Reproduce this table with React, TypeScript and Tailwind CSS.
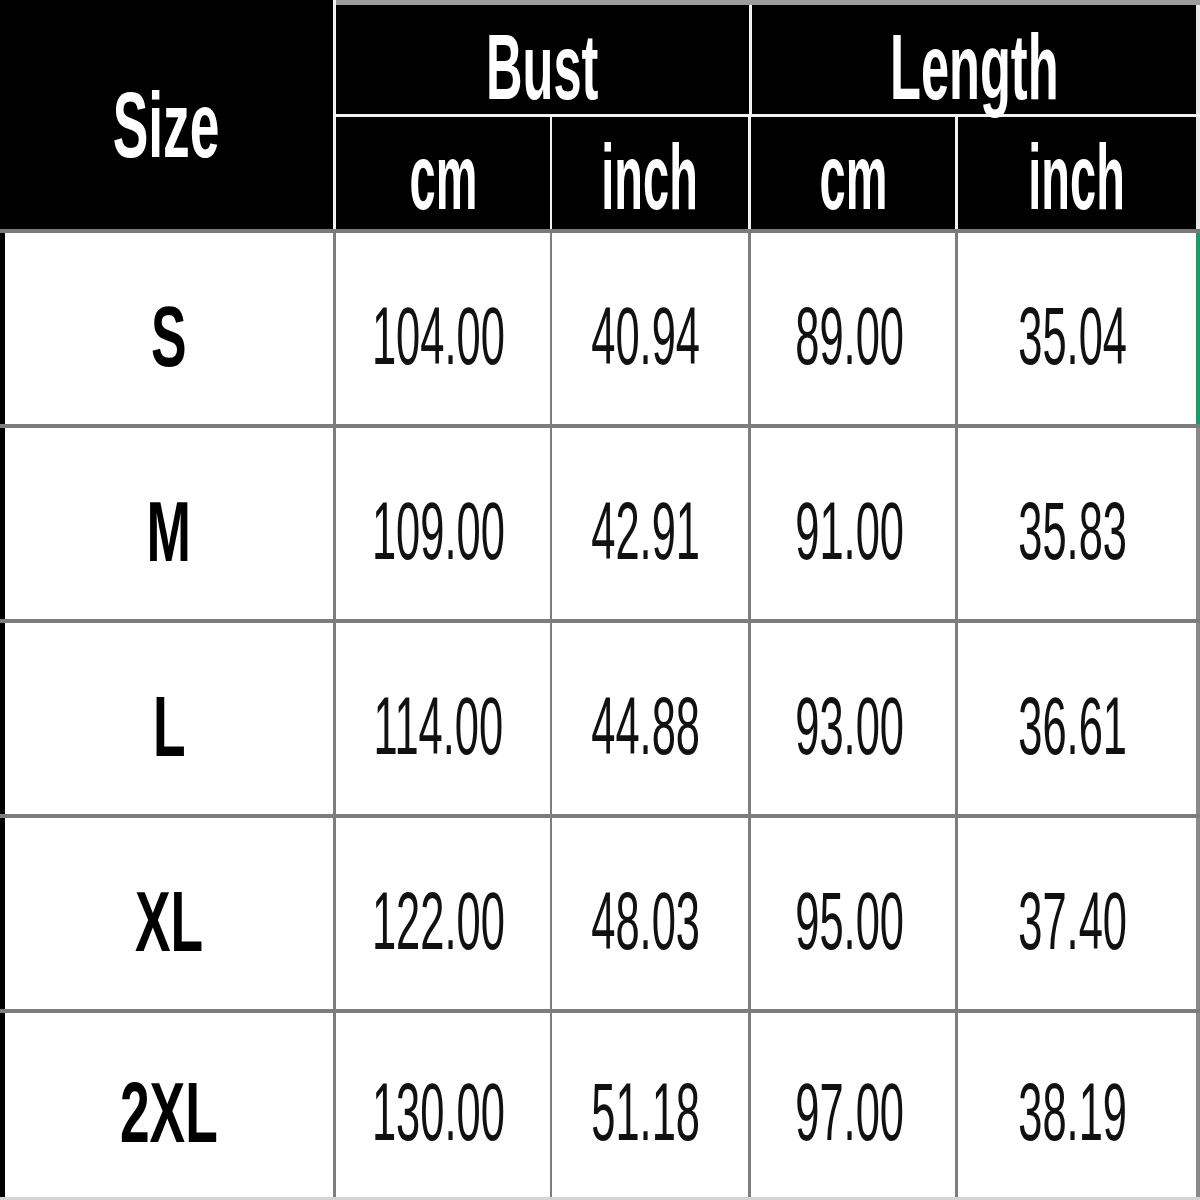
import React from 'react';

type Row = { size: string; bustCm: string; bustIn: string; lenCm: string; lenIn: string };

const rows: Row[] = [
  { size: 'S', bustCm: '104.00', bustIn: '40.94', lenCm: '89.00', lenIn: '35.04' },
  { size: 'M', bustCm: '109.00', bustIn: '42.91', lenCm: '91.00', lenIn: '35.83' },
  { size: 'L', bustCm: '114.00', bustIn: '44.88', lenCm: '93.00', lenIn: '36.61' },
  { size: 'XL', bustCm: '122.00', bustIn: '48.03', lenCm: '95.00', lenIn: '37.40' },
  { size: '2XL', bustCm: '130.00', bustIn: '51.18', lenCm: '97.00', lenIn: '38.19' },
];

// condensed look: Arial metrics squeezed horizontally
function Num({ children }: { children: React.ReactNode }) {
  return (
    <span className="inline-block shrink-0 whitespace-nowrap text-[82px] leading-none text-[#111] scale-x-[0.53]">
      {children}
    </span>
  );
}

export default function App() {
  return (
    <div
      className="w-[1200px] h-[1200px] overflow-hidden bg-white flex flex-col"
      style={{ fontFamily: '"Liberation Sans", Arial, sans-serif' }}
    >
      {/* Header */}
      <div className="flex h-[233px] shrink-0 bg-black border-b-4 border-b-[#7a7a7a] text-white font-bold">
        <div className="w-[336px] shrink-0 border-r-[3px] border-r-[#f2f2f2] flex items-center justify-center pt-[20px]">
          <span className="inline-block whitespace-nowrap text-[92px] leading-none scale-x-[0.58]">Size</span>
        </div>
        <div className="flex-1 flex flex-col">
          <div className="h-[5px] bg-[#9c9c9c]" />
          <div className="flex h-[109px]">
            <div className="w-[416px] shrink-0 border-r-[3px] border-r-[#f2f2f2] flex items-center justify-center pt-[14px]">
              <span className="inline-block whitespace-nowrap text-[92px] leading-none scale-x-[0.55]">Bust</span>
            </div>
            <div className="flex-1 border-r-4 border-r-[#e8e8e8] flex items-center justify-center pt-[14px]">
              <span className="inline-block whitespace-nowrap text-[92px] leading-none scale-x-[0.55]">Length</span>
            </div>
          </div>
          <div className="h-[3px] bg-[#f2f2f2]" />
          <div className="flex flex-1">
            <div className="w-[216px] shrink-0 border-r-2 border-r-[#f2f2f2] flex items-center justify-center pt-[7px]">
              <span className="inline-block whitespace-nowrap text-[92px] leading-none scale-x-[0.51]">cm</span>
            </div>
            <div className="w-[199px] shrink-0 border-r-[3px] border-r-[#f2f2f2] flex items-center justify-center pt-[7px]">
              <span className="inline-block whitespace-nowrap text-[92px] leading-none scale-x-[0.51]">inch</span>
            </div>
            <div className="w-[207px] shrink-0 border-r-[3px] border-r-[#f2f2f2] flex items-center justify-center pt-[7px]">
              <span className="inline-block whitespace-nowrap text-[92px] leading-none scale-x-[0.51]">cm</span>
            </div>
            <div className="flex-1 border-r-4 border-r-[#e8e8e8] flex items-center justify-center pt-[7px]">
              <span className="inline-block whitespace-nowrap text-[92px] leading-none scale-x-[0.51]">inch</span>
            </div>
          </div>
        </div>
      </div>

      {/* Body rows */}
      {rows.map((r, i) => {
        const last = i === rows.length - 1;
        return (
          <div
            key={r.size}
            className={
              last
                ? 'flex h-[187px] shrink-0 border-b-[3px] border-b-[#d4d4d4]'
                : 'flex h-[195px] shrink-0 border-b-4 border-b-[#7d7d7d]'
            }
          >
            <div className="w-[336px] shrink-0 border-l-[5px] border-l-black border-r-[3px] border-r-[#7d7d7d] flex items-center justify-center pt-[14px]">
              <span className="inline-block whitespace-nowrap text-[86px] font-bold leading-none text-black scale-x-[0.62]">
                {r.size}
              </span>
            </div>
            <div className="w-[216px] shrink-0 border-r-2 border-r-[#7d7d7d] flex items-center justify-center pt-[14px] pr-[9px]">
              <Num>{r.bustCm}</Num>
            </div>
            <div className="w-[199px] shrink-0 border-r-[3px] border-r-[#7d7d7d] flex items-center justify-center pt-[14px] pr-[9px]">
              <Num>{r.bustIn}</Num>
            </div>
            <div className="w-[207px] shrink-0 border-r-[3px] border-r-[#7d7d7d] flex items-center justify-center pt-[14px] pr-[6px]">
              <Num>{r.lenCm}</Num>
            </div>
            <div
              className={
                i === 0
                  ? 'flex-1 border-r-4 border-r-[#1f9a6c] flex items-center justify-center pt-[14px] pr-[9px]'
                  : 'flex-1 border-r-4 border-r-[#8a8a8a] flex items-center justify-center pt-[14px] pr-[9px]'
              }
            >
              <Num>{r.lenIn}</Num>
            </div>
          </div>
        );
      })}
    </div>
  );
}
